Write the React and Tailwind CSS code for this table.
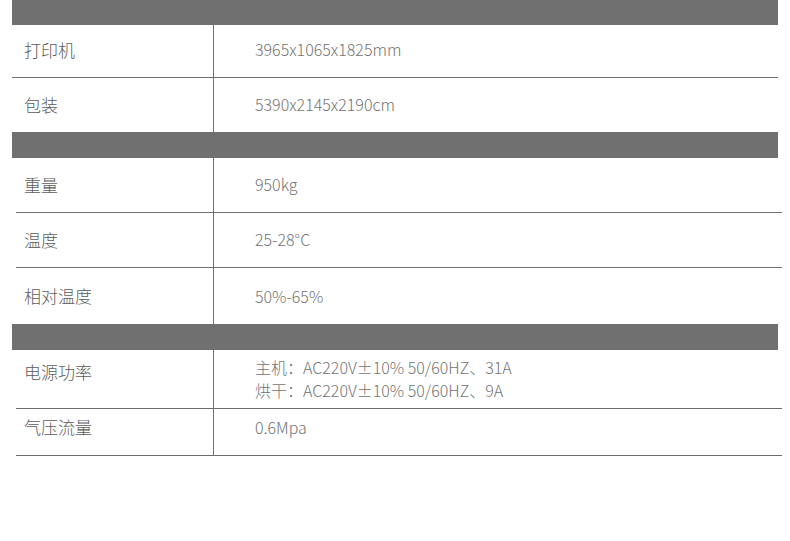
import React from "react";

const font = { fontFamily: '"Noto Sans CJK SC", "Noto Sans", sans-serif' };

const Bar = ({ h }) => <div className={`ml-[12px] w-[766px] bg-[#717070] ${h}`} />;

const Row = ({ label, children, wide, h, border = true, top, labelPad, valuePad }) => (
  <div
    className={`flex ${top ? "items-start" : "items-center"} ${h} ${
      wide ? "ml-[12px] w-[766px]" : "ml-[16px] w-[766px]"
    } ${border ? "border-b border-[#6f6f6f]" : ""}`}
  >
    <div
      className={`self-stretch flex ${top ? "items-start" : "items-center"} border-r border-[#6f6f6f] ${
        wide ? "w-[202px] pl-[12px]" : "w-[198px] pl-[8px]"
      } ${labelPad || ""}`}
    >
      <span className="text-[17px] leading-[24px] font-light text-[#5c5c5c]">{label}</span>
    </div>
    <div className={`pl-[41px] text-[16px] leading-[23px] font-light text-[#737373] ${valuePad || ""}`}>
      {children}
    </div>
  </div>
);

export default function App() {
  return (
    <div className="w-[790px] h-[541px] bg-white" style={font}>
      <Bar h="h-[25px]" />
      <Row label="打印机" wide h="h-[53px]" labelPad="pb-[3px]" valuePad="pb-[4px]">
        3965x1065x1825mm
      </Row>
      <Row label="包装" wide h="h-[54px]" border={false} valuePad="pb-[1px]">
        5390x2145x2190cm
      </Row>
      <Bar h="h-[26px]" />
      <Row label="重量" h="h-[55px]" valuePad="pb-[1px]">950kg</Row>
      <Row label="温度" h="h-[55px]" valuePad="pb-[1px]">25-28°C</Row>
      <Row label="相对温度" h="h-[56px]" border={false}>50%-65%</Row>
      <Bar h="h-[26px]" />
      <Row label="电源功率" h="h-[59px]" top labelPad="pt-[10px]" valuePad="pt-[6px]">
        <div>主机：AC220V±10% 50/60HZ、31A</div>
        <div>烘干：AC220V±10% 50/60HZ、9A</div>
      </Row>
      <Row label="气压流量" h="h-[47px]" top labelPad="pt-[6px]" valuePad="pt-[7px]">
        0.6Mpa
      </Row>
    </div>
  );
}
